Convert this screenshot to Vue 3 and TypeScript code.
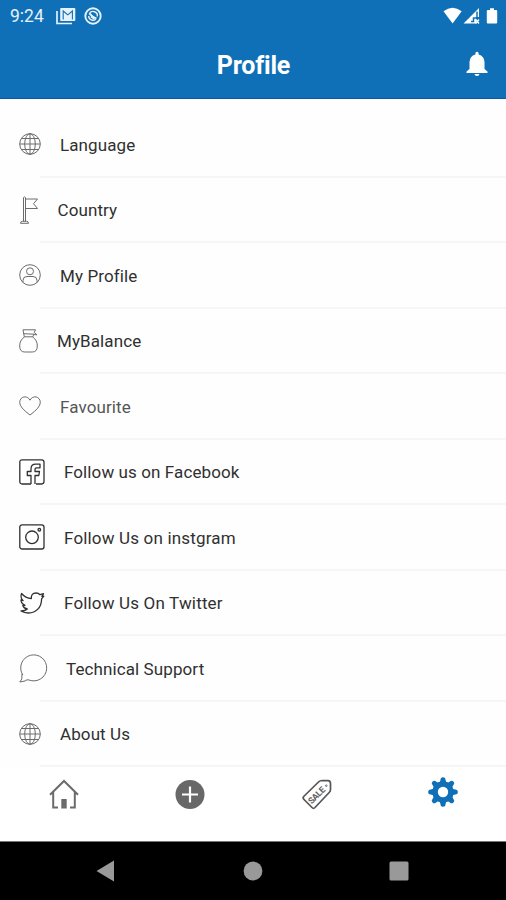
<script setup lang="ts">
type IconName =
  | 'globe' | 'flag' | 'person' | 'purse' | 'heart'
  | 'facebook' | 'instagram' | 'twitter' | 'chat'

interface MenuItem {
  label: string
  icon: IconName
  tone?: string
}

const items: MenuItem[] = [
  { label: 'Language', icon: 'globe' },
  { label: 'Country', icon: 'flag' },
  { label: 'My Profile', icon: 'person' },
  { label: 'MyBalance', icon: 'purse' },
  { label: 'Favourite', icon: 'heart', tone: 'soft' },
  { label: 'Follow us on Facebook', icon: 'facebook' },
  { label: 'Follow Us on instgram', icon: 'instagram', tone: 'wide' },
  { label: 'Follow Us On Twitter', icon: 'twitter', tone: 'wide' },
  { label: 'Technical Support', icon: 'chat' },
  { label: 'About Us', icon: 'globe' },
]
</script>

<template>
  <div class="screen">
    <header class="top">
      <div class="status">
        <span class="clock">9:24</span>
        <svg class="st-mail" width="20" height="18" viewBox="0 0 20 18">
          <path d="M1 4v12.500h15" fill="none" stroke="#e6f1fa" stroke-width="1.7" />
          <path d="M5 1h13.500q.8 0 .8.800v11.400q0 .8-.8.800H5q-.8 0-.8-.800V1.800Q4.200 1 5 1z" fill="#e6f1fa" />
          <path d="M7.200 12.500V4l4.600 3.800 4.600-3.800v8.500" fill="none" stroke="#0f70b7" stroke-width="1.100" />
        </svg>
        <svg class="st-circle" width="18" height="18" viewBox="0 0 18 18" fill="none" stroke="#e6f1fa">
          <circle cx="9" cy="9" r="7.700" stroke-width="1.900" />
          <path d="M5.400 6.500A4.300 4.300 0 0 1 13.300 9.500M11.800 12.200A4.300 4.300 0 0 1 4.700 9" stroke-width="1.400" />
          <path d="M5.200 6.300Q8 9.500 12.500 11.500M7 9.500l3.500 2.400" stroke-width="1.900" />
        </svg>
        <span class="grow"></span>
        <svg class="st-right" width="56" height="18" viewBox="0 0 56 18" fill="#fff">
          <path d="M.5 4.200Q9.600-2.800 18.700 4.200L9.600 16.500z" />
          <path d="M36 1v9h-3V16.500H20.500z" />
          <path d="M34 4.500v6.500h-3.500v3.500H28" fill="none" stroke="#0f70b7" stroke-width="1.500" />
          <path d="M32.700 12.500l3.300 4M36 12.500l-3.300 4" stroke="#fff" stroke-width="1.300" />
          <path d="M47 1.200h4v1.800h2.200q1 0 1 1v11.500q0 1-1 1h-8.400q-1 0-1-1V4q0-1 1-1H47z" />
        </svg>
      </div>
      <div class="bar">
        <h1>Profile</h1>
        <svg class="bell" width="22" height="26" viewBox="0 0 22 26" fill="#fff">
          <path d="M11 .8q1.600 0 1.600 1.700v.9Q18.300 4.900 18.500 11v7l3 2.600V22H.5v-1.400l3-2.600v-7Q3.700 4.900 9.400 3.400v-.9Q9.400.8 11 .8zM8.500 23h5q-.3 2-2.500 2t-2.500-2z" />
        </svg>
      </div>
    </header>

    <main class="menu">
      <div v-for="item in items" :key="item.label" class="row" :class="item.tone">
        <svg v-if="item.icon === 'globe'" class="ico" width="22" height="22" viewBox="0 0 22 22">
          <circle cx="11" cy="11" r="10.300" />
          <ellipse cx="11" cy="11" rx="5.300" ry="10.300" />
          <path d="M11 .7v20.600M.7 11h20.600M2.400 5.500h17.200M2.400 16.500h17.200" />
        </svg>
        <svg v-else-if="item.icon === 'flag'" class="ico flag" width="19" height="28" viewBox="0 0 19 28">
          <path d="M4.500 25.500V1.500q1-1.200 2 0v24M6.600 3h11.900l-4 4.700 4 4.800H6.600M1.500 27.300q0-2 2-2h4q2 0 2 2z" />
        </svg>
        <svg v-else-if="item.icon === 'person'" class="ico" width="22" height="22" viewBox="0 0 22 22">
          <circle cx="11" cy="11" r="10.300" />
          <circle cx="11" cy="7.300" r="3.500" />
          <path d="M4 18.500v-2.200q0-3.800 4-3.800h6q4 0 4 3.800v2.200" />
        </svg>
        <svg v-else-if="item.icon === 'purse'" class="ico" width="19" height="24" viewBox="0 0 19 24">
          <path d="M4 .8h12.500L15.200 3.500l2.800 2.300-3.200-.3-1 2.300H5.300L4 .8zM4.700 4.700l10.300.5M5.500 7.800C2 10.500.7 13 .7 17q0 6 5 6h7.600q5 0 5-6c0-4-1.300-6.500-4.800-9.200" />
        </svg>
        <svg v-else-if="item.icon === 'heart'" class="ico heart" width="22" height="20" viewBox="0 0 22 20">
          <path d="M11 19Q.7 11.500.7 6.500C.7 .3 8.300-1.300 11 4.200 13.700-1.300 21.300.3 21.300 6.500Q21.300 11.500 11 19z" />
        </svg>
        <svg v-else-if="item.icon === 'facebook'" class="ico dark" width="26" height="26" viewBox="0 0 26 26">
          <path d="M12 25H3.200Q.8 25 .8 22.600V3.200Q.8.8 3.200.8h19.400Q25 .8 25 3.200v19.400q0 2.400-2.400 2.400H17" />
          <path d="M12 25v-8.500H8.300v-4H12V10q0-4.800 4.800-4.800h4.200v3.600h-3.500q-1.500 0-1.500 1.600v2.100h4.500l-.7 4H16V25" />
        </svg>
        <svg v-else-if="item.icon === 'instagram'" class="ico dark" width="26" height="26" viewBox="0 0 26 26">
          <rect x=".8" y=".8" width="24.200" height="24.200" rx="2.300" />
          <circle cx="13" cy="13.300" r="6.300" />
          <circle cx="20.300" cy="5.700" r="1.300" />
        </svg>
        <svg v-else-if="item.icon === 'twitter'" class="ico dark twitter" width="26" height="22" viewBox="0 0 26 22">
          <path d="M2.600 1.500Q6.500 6.300 12.300 6.500 12 1 17 1q2.500 0 4 1.700l3.500-1-1.600 2.700 1.900-.3-2.200 2.800C22.500 15.500 17 21 9.500 21q-4.300 0-7.500-2 4 .1 6.300-2-3.500-.5-4.500-3.500l2.200-.1Q2 11.500 2 8l2.100.7Q.8 5.500 2.600 1.500z" />
        </svg>
        <svg v-else class="ico chat" width="29" height="29" viewBox="0 0 29 29">
          <path d="M3.700 20.800A13 13 0 1 1 10 26Q8 25 6 27L.8 28Q3.700 26 3 20z" />
        </svg>
        <span class="label">{{ item.label }}</span>
      </div>
    </main>

    <nav class="tabs">
      <div class="tab">
        <svg width="30" height="31" viewBox="0 0 30 31" fill="none" stroke="#6b6b6b" stroke-width="2">
          <path d="M1 15.700L15 2l14 13.700M4.200 13v15.500H9M25.800 13v15.500H21" />
          <path d="M12.300 20h5.400v9.500h-5.400z" fill="#6b6b6b" stroke="none" />
        </svg>
      </div>
      <div class="tab">
        <svg width="30" height="31" viewBox="0 0 30 31">
          <circle cx="15" cy="15.500" r="14.500" fill="#686868" />
          <path d="M15 7.500v16M7 15.500h16" stroke="#fff" stroke-width="2.200" />
        </svg>
      </div>
      <div class="tab">
        <svg width="30" height="31" viewBox="0 0 30 31">
          <path d="M1.700 17.500L16.500 3q1.500-1.500 3.500-1.500l6 .2q2.500.2 2.500 3v5.800q0 1.700-1.300 3L13 28.500q-1.500 1.500-3 0L2 20.500q-1.500-1.500-.3-3z" fill="none" stroke="#555" stroke-width="1.700" />
          <circle cx="24.300" cy="6.700" r=".8" fill="none" stroke="#555" stroke-width=".8" />
          <text x="14.200" y="19.500" transform="rotate(-45 14.200 16)" text-anchor="middle" class="sale">SALE</text>
        </svg>
      </div>
      <div class="tab active">
        <svg width="30" height="30" viewBox="-15 -15 30 30">
          <g fill="#0f70b7">
            <g v-for="n in 8" :key="n" :transform="`rotate(${n * 45})`">
              <path d="M-4.500-8.500Q-2.600-10-2.500-12.300a2.500 2.500 0 0 1 5 0Q2.600-10 4.500-8.500z" />
            </g>
            <circle r="10.700" />
          </g>
          <circle r="5.200" fill="#fff" />
        </svg>
      </div>
    </nav>

    <footer class="system">
      <svg width="18" height="22" viewBox="0 0 18 22"><path d="M.5 11L18 .5v21z" fill="#999" /></svg>
      <svg class="circle" width="20" height="20" viewBox="0 0 20 20"><circle cx="10" cy="10" r="9.400" fill="#999" /></svg>
      <svg width="20" height="20" viewBox="0 0 20 20"><rect x=".5" y=".5" width="19" height="19" rx="1.500" fill="#999" /></svg>
    </footer>
  </div>
</template>

<style>
body {
  margin: 0;
  background: #fff;
}
</style>

<style scoped>
.screen {
  width: 506px;
  height: 900px;
  display: flex;
  flex-direction: column;
  overflow: hidden;
  background: #fefefe;
  font-family: Roboto, "Liberation Sans", sans-serif;
}
svg {
  display: block;
  flex: none;
}
.top {
  box-sizing: border-box;
  height: 99px;
  flex: none;
  background: #0f70b7;
  border-bottom: 1px solid #0b58a5;
  color: #fff;
}
.status {
  height: 32px;
  display: flex;
  align-items: center;
  padding: 0 7px 0 10px;
}
.clock {
  width: 46px;
  font-size: 17.5px;
  line-height: 32px;
  color: #e6f1fa;
}
.st-mail {
  margin-top: -1px;
}
.st-circle {
  margin: -1px 0 0 8px;
}
.st-right {
  margin-top: -1px;
}
.grow {
  flex: 1;
}
.bar {
  display: grid;
  grid-template-columns: 1fr auto 1fr;
  align-items: center;
  height: 66px;
  padding: 1px 18px 0 19px;
  box-sizing: border-box;
}
h1 {
  grid-column: 2;
  margin: 0;
  font-size: 25px;
  line-height: 30px;
  font-weight: 700;
  letter-spacing: -0.2px;
}
.bell {
  justify-self: end;
  margin-top: -3px;
}
.menu {
  flex: none;
  padding-top: 13px;
  height: 655px;
}
.row {
  height: 65.500px;
  display: flex;
  align-items: center;
  gap: 19px;
  padding-left: 19px;
  background: linear-gradient(#f6f6f6, #f6f6f6) 40px 100% / 100% 2px no-repeat;
}
.ico {
  fill: none;
  stroke: #6c6c6c;
  stroke-width: 1;
  stroke-linejoin: round;
  margin-top: -1px;
}
.dark {
  stroke: #303030;
  stroke-width: 1.300;
}
.label {
  font-size: 17px;
  line-height: 24px;
  letter-spacing: 0.1px;
  color: #303030;
  white-space: nowrap;
}
.flag + .label {
  margin-left: 0.500px;
}
.chat + .label {
  margin-left: -1px;
}
.wide .label {
  letter-spacing: 0.170px;
}
.soft .label {
  color: #565656;
}
.tabs {
  height: 74px;
  flex: none;
  display: grid;
  grid-template-columns: repeat(4, 1fr);
  background: #fff;
  border-bottom: 1px solid #777;
}
.tab {
  display: flex;
  justify-content: center;
  padding: 12px 0 0 1px;
}
.active {
  padding-top: 10px;
}
.sale {
  font-family: Roboto, "Liberation Sans", sans-serif;
  font-size: 8.800px;
  font-weight: 700;
  letter-spacing: -0.3px;
  fill: #606060;
}
.system {
  flex: 1;
  display: flex;
  align-items: center;
  justify-content: space-between;
  padding: 0 97px 0 96px;
  background: #000;
}
.circle {
  margin-left: 3px;
}
</style>
